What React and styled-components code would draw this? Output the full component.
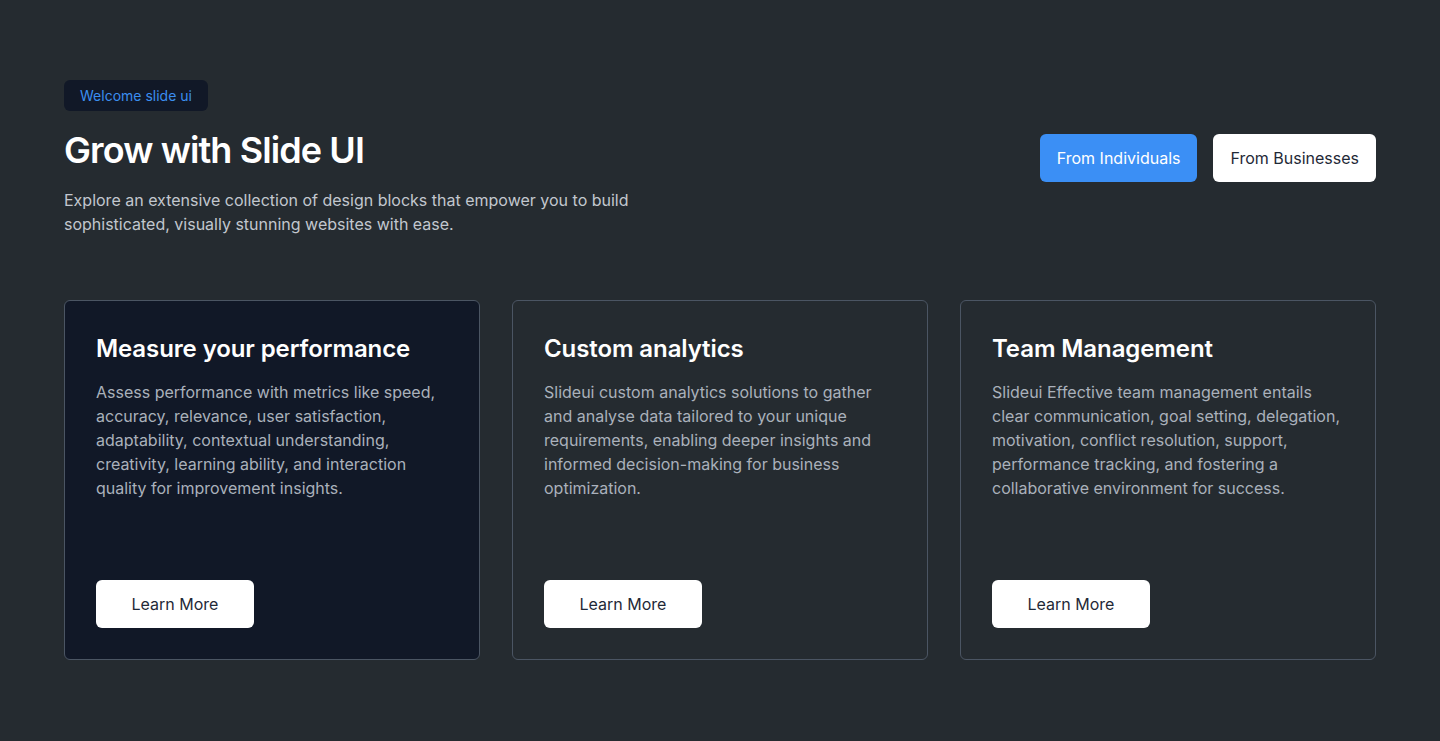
import React from "react";
import styled, { createGlobalStyle } from "styled-components";

const Global = createGlobalStyle`
  html, body { margin: 0; padding: 0; }
  body {
    background: #252b30;
    font-family: Inter, "Noto Sans", sans-serif;
    -webkit-font-smoothing: antialiased;
  }
`;

const Page = styled.main`
  box-sizing: border-box;
  width: 100%;
  min-height: 741px;
  padding: 80px 64px 64px;
  background: #252b30;
`;

const Header = styled.header`
  display: flex;
  justify-content: space-between;
  align-items: flex-start;
`;

const Intro = styled.div`
  display: flex;
  flex-direction: column;
  align-items: flex-start;
  max-width: 600px;
`;

const Badge = styled.span`
  display: inline-block;
  box-sizing: border-box;
  height: 31px;
  line-height: 31px;
  padding: 0 16px;
  border-radius: 6px;
  background: #111827;
  color: #3b8ef0;
  font-size: 14px;
`;

const Title = styled.h1`
  margin: 17px 0 0;
  font-size: 36px;
  line-height: 44px;
  font-weight: 600;
  color: #ffffff;
  letter-spacing: -0.9px;
`;

const Lead = styled.p`
  margin: 16px 0 0;
  font-size: 16px;
  line-height: 24px;
  color: #c2c7ce;
`;

const Toggle = styled.div`
  display: flex;
  gap: 16px;
  margin-top: 54px;
`;

const ToggleButton = styled.button`
  height: 48px;
  padding: 0 17px;
  border: none;
  border-radius: 6px;
  font-family: inherit;
  font-size: 16px;
  cursor: pointer;
  background: ${(p) => (p.$active ? "#3b8ff5" : "#ffffff")};
  color: ${(p) => (p.$active ? "#ffffff" : "#1f2937")};
`;

const Grid = styled.section`
  display: grid;
  grid-template-columns: repeat(3, 1fr);
  gap: 32px;
  margin-top: 64px;
`;

const Card = styled.article`
  box-sizing: border-box;
  height: 360px;
  padding: 31px;
  display: flex;
  flex-direction: column;
  align-items: flex-start;
  border: 1px solid #4b5563;
  border-radius: 6px;
  background: ${(p) => (p.$highlight ? "#111827" : "transparent")};
`;

const CardTitle = styled.h2`
  margin: 1px 0 0;
  font-size: 24px;
  line-height: 32px;
  font-weight: 600;
  color: #ffffff;
  letter-spacing: -0.1px;
`;

const CardText = styled.p`
  margin: 15px 0 0;
  font-size: 16px;
  line-height: 24px;
  color: #aab1bb;
  flex: 1;
`;

const LearnButton = styled.button`
  width: 158px;
  height: 48px;
  border: none;
  border-radius: 6px;
  background: #ffffff;
  color: #1f2937;
  font-family: inherit;
  font-size: 16px;
  cursor: pointer;
`;

const cards = [
  {
    title: "Measure your performance",
    text: "Assess performance with metrics like speed, accuracy, relevance, user satisfaction, adaptability, contextual understanding, creativity, learning ability, and interaction quality for improvement insights.",
    highlight: true,
  },
  {
    title: "Custom analytics",
    text: "Slideui custom analytics solutions to gather and analyse data tailored to your unique requirements, enabling deeper insights and informed decision-making for business optimization.",
  },
  {
    title: "Team Management",
    text: "Slideui Effective team management entails clear communication, goal setting, delegation, motivation, conflict resolution, support, performance tracking, and fostering a collaborative environment for success.",
  },
];

export default function App() {
  return (
    <>
      <Global />
      <Page>
        <Header>
          <Intro>
            <Badge>Welcome slide ui</Badge>
            <Title>Grow with Slide UI</Title>
            <Lead>
              Explore an extensive collection of design blocks that empower you to build
              sophisticated, visually stunning websites with ease.
            </Lead>
          </Intro>
          <Toggle>
            <ToggleButton $active>From Individuals</ToggleButton>
            <ToggleButton>From Businesses</ToggleButton>
          </Toggle>
        </Header>
        <Grid>
          {cards.map((c) => (
            <Card key={c.title} $highlight={c.highlight}>
              <CardTitle>{c.title}</CardTitle>
              <CardText>{c.text}</CardText>
              <LearnButton>Learn More</LearnButton>
            </Card>
          ))}
        </Grid>
      </Page>
    </>
  );
}
